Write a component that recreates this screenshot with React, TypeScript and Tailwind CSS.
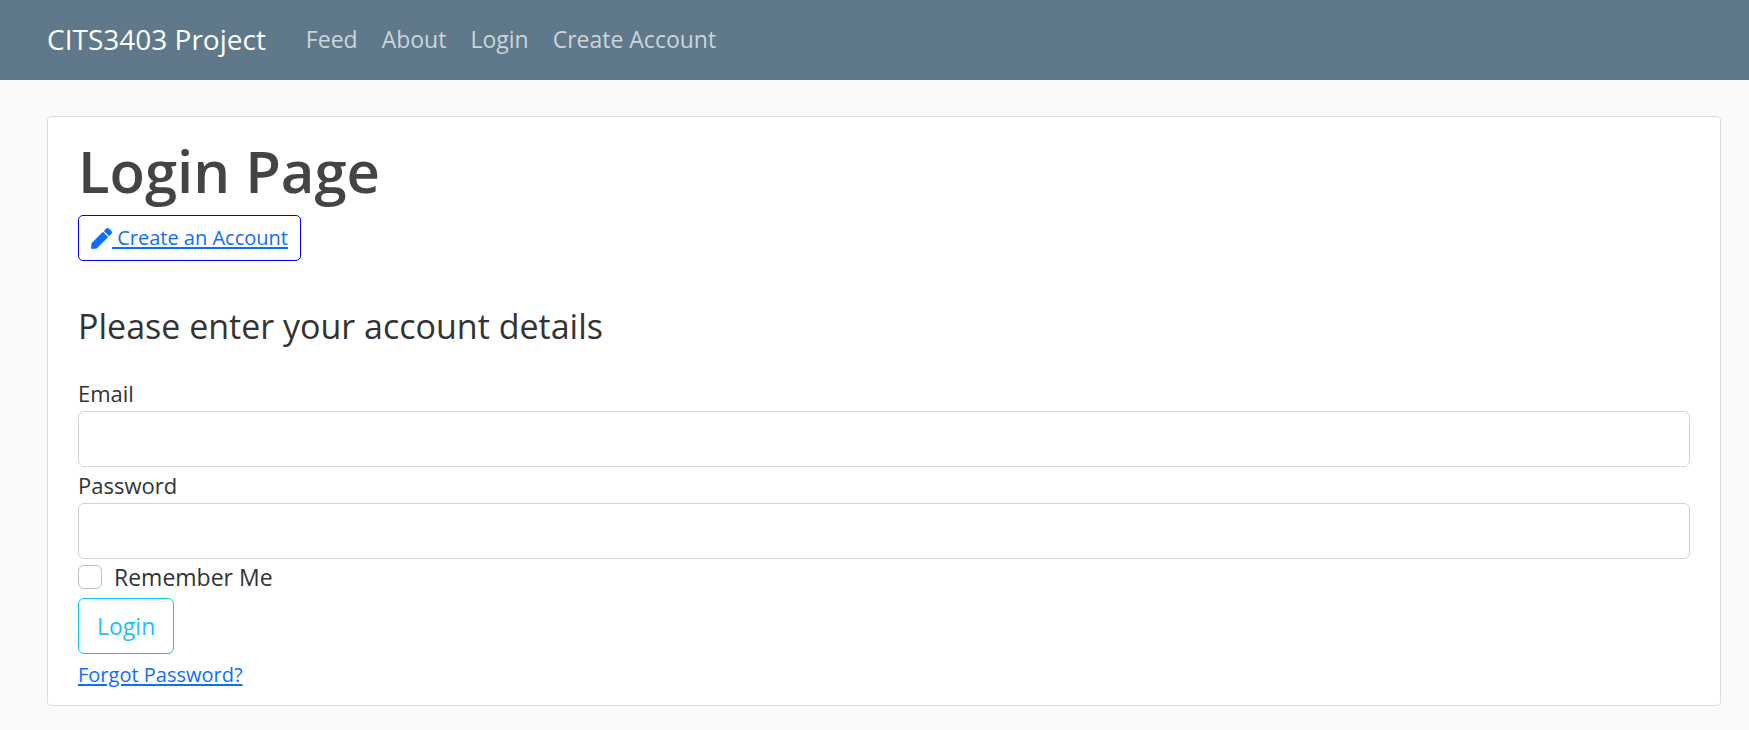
import React from "react";

const navLinks = ["Feed", "About", "Login", "Create Account"];

function PencilIcon() {
  return (
    <svg viewBox="0 0 512 512" className="size-[21px] shrink-0" fill="currentColor" aria-hidden="true">
      <path d="M290.74 93.24l128.02 128.02-277.99 277.99-114.14 12.6C11.35 513.54-1.56 500.62.14 485.34l12.7-114.22 277.9-277.88zm207.2-19.06l-60.11-60.11c-18.75-18.75-49.16-18.75-67.91 0l-56.55 56.55 128.02 128.02 56.55-56.55c18.75-18.76 18.75-49.16 0-67.91z" />
    </svg>
  );
}

function Field({ id, label, type }: { id: string; label: string; type: string }) {
  return (
    <div>
      <label htmlFor={id} className="block h-9 text-[22px] leading-9">
        {label}
      </label>
      <input
        id={id}
        type={type}
        className="block h-14 w-full rounded-md border border-[#ced4da] bg-white px-4 outline-none focus:border-[#86b7fe]"
      />
    </div>
  );
}

export default function App() {
  return (
    <div className="min-h-screen bg-[#fafafa] font-['Open_Sans','Noto_Sans',sans-serif] text-[23px] text-[#333333]">
      <header className="flex h-20 items-center bg-[#5f788a] pb-0.5 pl-[47px] pr-7">
        <a href="#" className="mr-10 text-[28px] leading-10 text-white">
          CITS3403 Project
        </a>
        <nav className="flex gap-6">
          {navLinks.map((link) => (
            <a key={link} href="#" className="leading-9 text-[#cbd5dc] hover:text-white">
              {link}
            </a>
          ))}
        </nav>
      </header>

      <main className="pl-[47px] pr-7 pt-9">
        <article className="rounded border border-[#dddddd] bg-white px-[30px] pb-3 pt-[18px]">
          <h1 className="text-[58px] font-semibold leading-[72px] text-[#444444]">Login Page</h1>
          <a
            href="#"
            className="mt-2 inline-flex h-[46px] items-center rounded-[5px] border border-[#0000ff] px-3 text-[20px] text-[#0d6efd]"
          >
            <PencilIcon />
            <span className="whitespace-pre underline decoration-2 underline-offset-2"> Create an Account</span>
          </a>

          <form onSubmit={(e) => e.preventDefault()}>
            <h2 className="mt-[38px] text-[34px] leading-[54px]">Please enter your account details</h2>
            <div className="mt-[22px]">
              <Field id="email" label="Email" type="email" />
              <Field id="password" label="Password" type="password" />
            </div>
            <div className="flex h-9 items-center gap-3">
              <input
                id="remember"
                type="checkbox"
                className="size-6 appearance-none rounded-md border border-[#bfbfbf] bg-white checked:bg-[#0d6efd]"
              />
              <label htmlFor="remember">Remember Me</label>
            </div>
            <button
              type="submit"
              className="mt-[3px] block h-14 rounded-md border border-[#0dcaf0] px-[18px] text-[#25bfee]"
            >
              Login
            </button>
          </form>
          <a href="#" className="mt-[3px] inline-block text-[20px] leading-9 text-[#0d6efd] underline decoration-2 underline-offset-2">
            Forgot Password?
          </a>
        </article>
      </main>
    </div>
  );
}
